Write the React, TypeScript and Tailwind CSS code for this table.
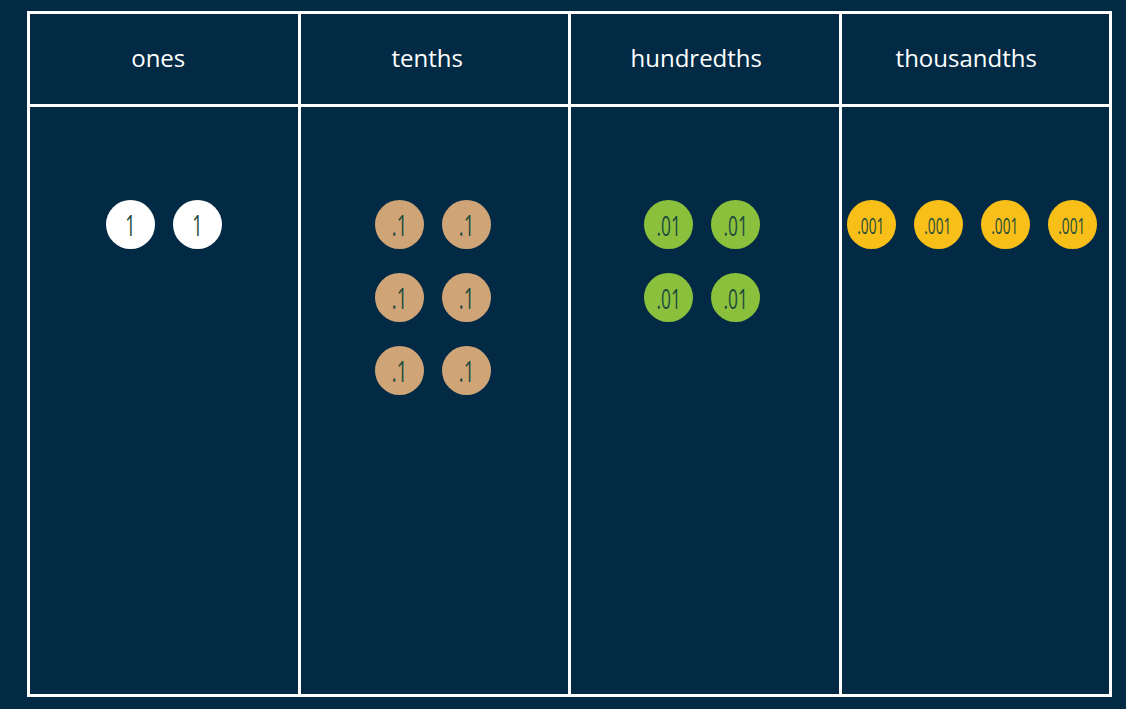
import React from 'react';

interface Column {
  title: string;
  label: string;
  count: number;
  perRow: number;
  coin: string;
  text: string;
  shift: string;
  headShift: string;
}

const columns: Column[] = [
  { title: 'ones', label: '1', count: 2, perRow: 2, coin: 'bg-white', text: 'text-[29px]', shift: 'ml-0', headShift: 'pr-[11px]' },
  { title: 'tenths', label: '.1', count: 6, perRow: 2, coin: 'bg-[#cfa476]', text: 'text-[30px]', shift: 'pr-[3px]', headShift: 'pr-[14px]' },
  { title: 'hundredths', label: '.01', count: 4, perRow: 2, coin: 'bg-[#8bc03d]', text: 'text-[28px]', shift: 'pr-[6px]', headShift: 'pr-[17px]' },
  { title: 'thousandths', label: '.001', count: 4, perRow: 4, coin: 'bg-[#f7bf18]', text: 'text-[22px]', shift: 'pr-[7px]', headShift: 'pr-[18px]' },
];

const Coin = ({ label, coin, text }: { label: string; coin: string; text: string }) => (
  <div className={`w-[49px] h-[49px] rounded-full flex items-center justify-center ${coin}`}>
    <span
      className={`${text} leading-none text-[#1b4a3e] scale-x-[0.62] whitespace-nowrap antialiased`}
      style={{ fontFamily: '"Open Sans", sans-serif' }}
    >
      {label}
    </span>
  </div>
);

const App = () => {
  return (
    <div className="w-[1126px] h-[709px] bg-[#032a45] pt-[11px] pl-[27px]">
      <div className="w-[1085px] h-[686px] bg-white p-[3px] grid grid-cols-4 grid-rows-[90px_1fr] gap-[3px]">
        {columns.map(col => (
          <div
            key={col.title + '-h'}
            className={`bg-[#032a45] flex items-center justify-center pb-[2px] text-white text-[24px] font-medium antialiased ${col.headShift}`}
            style={{ fontFamily: '"Open Sans", sans-serif' }}
          >
            {col.title}
          </div>
        ))}
        {columns.map(col => (
          <div key={col.title + '-b'} className={`bg-[#032a45] flex justify-center pt-[93px] ${col.shift}`}>
            <div
              className={`grid gap-x-[18px] gap-y-[24px] h-fit ${col.perRow === 4 ? 'grid-cols-4' : 'grid-cols-2'}`}
            >
              {Array.from({ length: col.count }).map((_, i) => (
                <Coin key={i} label={col.label} coin={col.coin} text={col.text} />
              ))}
            </div>
          </div>
        ))}
      </div>
    </div>
  );
};

export default App;
